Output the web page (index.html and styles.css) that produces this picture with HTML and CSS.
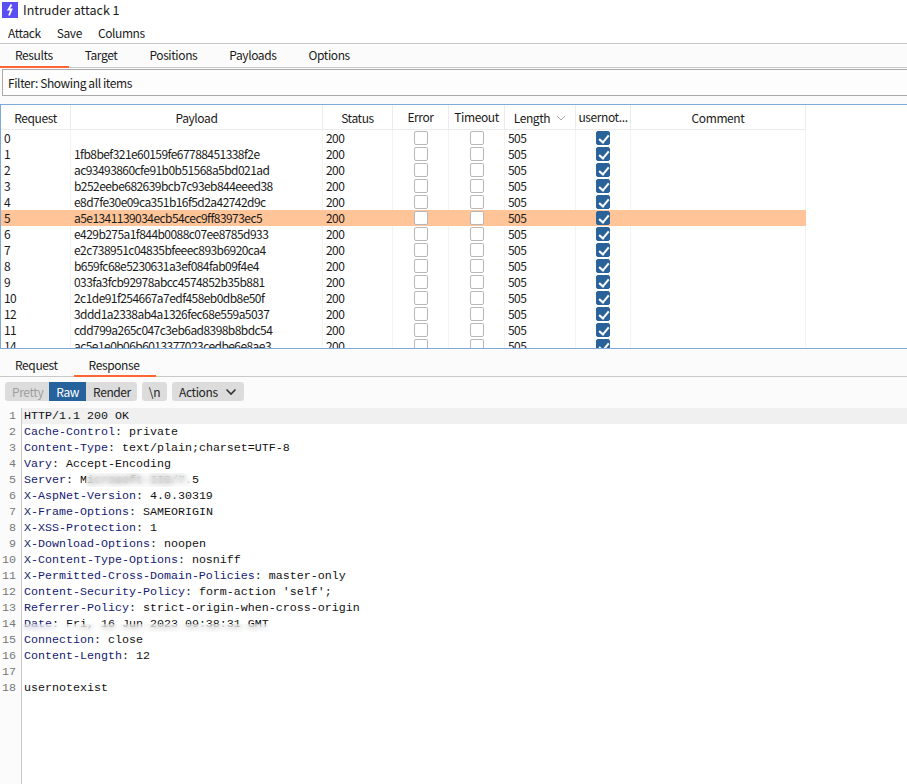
FILE: index.html
```html
<!DOCTYPE html>
<html lang="en">
<head>
<meta charset="utf-8">
<title>Intruder attack 1</title>
<link rel="stylesheet" href="styles.css">
</head>
<body>
<header class="titlebar">
  <svg class="logo" width="16" height="16" viewBox="0 0 16 16"><rect width="16" height="16" fill="#5a4ff3"/><path d="M9.500 2.500 6.500 7.500h3L7 13.500" fill="none" stroke="#fff" stroke-width="1.800"/></svg>
  <span>Intruder attack 1</span>
</header>
<nav class="menubar"><span>Attack</span><span>Save</span><span>Columns</span></nav>
<nav class="tabs top-tabs">
  <span class="tab active">Results</span><span class="tab">Target</span><span class="tab">Positions</span><span class="tab">Payloads</span><span class="tab">Options</span>
</nav>
<div class="filter"><div class="filter-box">Filter: Showing all items</div></div>
<section class="table">
  <div class="row head">
    <div>Request</div><div>Payload</div><div>Status</div><div>Error</div><div>Timeout</div>
    <div class="sorted">Length<svg width="10" height="6" viewBox="0 0 10 6"><path d="M1 1l4 4 4-4" fill="none" stroke="#aaa"/></svg></div>
    <div>usernot...</div><div>Comment</div>
  </div>
  <div class="rows">
    <div class="row"><div>0</div><div></div><div>200</div><div><i class="cb"></i></div><div><i class="cb"></i></div><div>505</div><div><i class="cb on"></i></div><div></div></div>
    <div class="row"><div>1</div><div>1fb8bef321e60159fe67788451338f2e</div><div>200</div><div><i class="cb"></i></div><div><i class="cb"></i></div><div>505</div><div><i class="cb on"></i></div><div></div></div>
    <div class="row"><div>2</div><div>ac93493860cfe91b0b51568a5bd021ad</div><div>200</div><div><i class="cb"></i></div><div><i class="cb"></i></div><div>505</div><div><i class="cb on"></i></div><div></div></div>
    <div class="row"><div>3</div><div>b252eebe682639bcb7c93eb844eeed38</div><div>200</div><div><i class="cb"></i></div><div><i class="cb"></i></div><div>505</div><div><i class="cb on"></i></div><div></div></div>
    <div class="row"><div>4</div><div>e8d7fe30e09ca351b16f5d2a42742d9c</div><div>200</div><div><i class="cb"></i></div><div><i class="cb"></i></div><div>505</div><div><i class="cb on"></i></div><div></div></div>
    <div class="row selected"><div>5</div><div>a5e1341139034ecb54cec9ff83973ec5</div><div>200</div><div><i class="cb"></i></div><div><i class="cb"></i></div><div>505</div><div><i class="cb on"></i></div><div></div></div>
    <div class="row"><div>6</div><div>e429b275a1f844b0088c07ee8785d933</div><div>200</div><div><i class="cb"></i></div><div><i class="cb"></i></div><div>505</div><div><i class="cb on"></i></div><div></div></div>
    <div class="row"><div>7</div><div>e2c738951c04835bfeeec893b6920ca4</div><div>200</div><div><i class="cb"></i></div><div><i class="cb"></i></div><div>505</div><div><i class="cb on"></i></div><div></div></div>
    <div class="row"><div>8</div><div>b659fc68e5230631a3ef084fab09f4e4</div><div>200</div><div><i class="cb"></i></div><div><i class="cb"></i></div><div>505</div><div><i class="cb on"></i></div><div></div></div>
    <div class="row"><div>9</div><div>033fa3fcb92978abcc4574852b35b881</div><div>200</div><div><i class="cb"></i></div><div><i class="cb"></i></div><div>505</div><div><i class="cb on"></i></div><div></div></div>
    <div class="row"><div>10</div><div>2c1de91f254667a7edf458eb0db8e50f</div><div>200</div><div><i class="cb"></i></div><div><i class="cb"></i></div><div>505</div><div><i class="cb on"></i></div><div></div></div>
    <div class="row"><div>12</div><div>3ddd1a2338ab4a1326fec68e559a5037</div><div>200</div><div><i class="cb"></i></div><div><i class="cb"></i></div><div>505</div><div><i class="cb on"></i></div><div></div></div>
    <div class="row"><div>11</div><div>cdd799a265c047c3eb6ad8398b8bdc54</div><div>200</div><div><i class="cb"></i></div><div><i class="cb"></i></div><div>505</div><div><i class="cb on"></i></div><div></div></div>
    <div class="row"><div>14</div><div>ac5e1e0b06b6013377023cedbe6e8ae3</div><div>200</div><div><i class="cb"></i></div><div><i class="cb"></i></div><div>505</div><div><i class="cb on"></i></div><div></div></div>
  </div>
</section>
<nav class="tabs sub-tabs">
  <span class="tab">Request</span><span class="tab active">Response</span>
</nav>
<div class="toolbar">
  <div class="segment"><span class="btn muted">Pretty</span><span class="btn current">Raw</span><span class="btn render">Render</span></div>
  <span class="btn single">\n</span>
  <span class="btn single actions">Actions<svg width="12" height="8" viewBox="0 0 12 8"><path d="M1.500 1.500 6 6l4.500-4.500" fill="none" stroke="#333" stroke-width="1.600"/></svg></span>
</div>
<section class="editor">
  <div class="line hl"><b>1</b><code>HTTP/1.1 200 OK</code></div>
  <div class="line"><b>2</b><code><em>Cache-Control</em>: private</code></div>
  <div class="line"><b>3</b><code><em>Content-Type</em>: text/plain;charset=UTF-8</code></div>
  <div class="line"><b>4</b><code><em>Vary</em>: Accept-Encoding</code></div>
  <div class="line"><b>5</b><code><em>Server</em>: Microsoft-IIS/7.5<span class="smudge server"></span></code></div>
  <div class="line"><b>6</b><code><em>X-AspNet-Version</em>: 4.0.30319</code></div>
  <div class="line"><b>7</b><code><em>X-Frame-Options</em>: SAMEORIGIN</code></div>
  <div class="line"><b>8</b><code><em>X-XSS-Protection</em>: 1</code></div>
  <div class="line"><b>9</b><code><em>X-Download-Options</em>: noopen</code></div>
  <div class="line"><b>10</b><code><em>X-Content-Type-Options</em>: nosniff</code></div>
  <div class="line"><b>11</b><code><em>X-Permitted-Cross-Domain-Policies</em>: master-only</code></div>
  <div class="line"><b>12</b><code><em>Content-Security-Policy</em>: form-action 'self';</code></div>
  <div class="line"><b>13</b><code><em>Referrer-Policy</em>: strict-origin-when-cross-origin</code></div>
  <div class="line"><b>14</b><code><em>Date</em>: Fri, 16 Jun 2023 09:38:31 GMT<span class="smudge date"></span></code></div>
  <div class="line"><b>15</b><code><em>Connection</em>: close</code></div>
  <div class="line"><b>16</b><code><em>Content-Length</em>: 12</code></div>
  <div class="line"><b>17</b><code></code></div>
  <div class="line"><b>18</b><code>usernotexist</code></div>
</section>
</body>
</html>
```
FILE: styles.css
```css
* { box-sizing: border-box; }
html, body { margin: 0; height: 100%; }
body {
  width: 907px;
  height: 784px;
  overflow: hidden;
  background: #fff;
  color: #1a1a1a;
  font: 12px/16px "Noto Sans CJK SC", "Noto Sans", sans-serif;
  letter-spacing: -0.4px;
  display: flex;
  flex-direction: column;
}
.titlebar {
  height: 23px;
  padding: 0 0 3px 2px;
  display: flex;
  align-items: center;
  gap: 5px;
  font-size: 12.500px;
  letter-spacing: 0;
}
.menubar {
  height: 21px;
  padding: 0 0 0 8px;
  display: flex;
  gap: 16px;
  align-items: center;
  border-bottom: 1px solid #c8c8c8;
}
.tabs { display: flex; background: #fbfbfb; }
.tab {
  display: flex;
  align-items: center;
  justify-content: center;
  border-bottom: 2px solid transparent;
}
.tab.active { border-bottom-color: #ff6633; }
.top-tabs {
  height: 24px;
  border-bottom: 1px solid #c8c8c8;
}
.top-tabs .tab { height: 24px; padding: 0 16px; }
.top-tabs .tab.active { padding: 0 16px 0 15px; }
.filter {
  height: 36px;
  padding: 1px 0 8px 2px;
  background: #fbfbfb;
  display: flex;
}
.filter-box {
  flex: 1;
  display: flex;
  align-items: center;
  padding-left: 5px;
  border: 1px solid #aaa;
  border-right: 0;
  background: #fdfdfd;
}
.table {
  height: 245px;
  border-top: 1px solid #7fa9d8;
  border-bottom: 1px solid #7fa9d8;
  border-left: 1px solid #7fa9d8;
  display: flex;
  flex-direction: column;
  overflow: hidden;
  background: #fff;
}
.row {
  display: grid;
  grid-template-columns: 70px 252px 70px 56px 56px 71px 55px 175px;
  width: 805px;
  height: 16px;
  letter-spacing: -0.56px;
}
.row > div {
  padding-left: 3px;
  display: flex;
  align-items: center;
  border-right: 1px solid #f3f3f3;
}
.row > div:nth-child(4), .row > div:nth-child(5), .row > div:nth-child(7) {
  justify-content: center;
  padding: 0;
}
.row.selected { background: #ffc599; }
.row.selected > div { border-right-color: transparent; }
.head {
  height: 25px;
  border-bottom: 1px solid #ececec;
  flex: none;
  background: #fff;
  letter-spacing: -0.4px;
}
.head > div {
  justify-content: center;
  padding: 1px 0 0;
  border-right: 1px solid #ececec;
  white-space: nowrap;
}
.sorted { gap: 6px; }
.rows { flex: 1; overflow: hidden; }
.cb {
  display: block;
  width: 14px;
  height: 14px;
  border: 1px solid #b8b8b8;
  border-radius: 2px;
  background: #fff;
  position: relative;
}
.cb.on {
  background: #2a6399;
  border-color: #2a6399;
}
.cb.on::after {
  content: "";
  position: absolute;
  left: 4px;
  top: 1px;
  width: 4px;
  height: 8px;
  border: solid #fff;
  border-width: 0 2px 2px 0;
  transform: rotate(40deg);
}
.sub-tabs {
  height: 28px;
  padding-top: 5px;
  border-bottom: 1px solid #c8c8c8;
}
.sub-tabs .tab { height: 23px; margin-bottom: -1px; padding: 0 16px 0 15px; }
.sub-tabs .tab.active { padding: 0 17px 0 15px; }
.toolbar {
  height: 31px;
  padding: 5px 0 0 5px;
  display: flex;
  gap: 5px;
  align-items: flex-start;
  background: #fbfbfb;
}
.segment { display: flex; border-radius: 3px; overflow: hidden; }
.btn {
  height: 19px;
  background: #dcdcdc;
  padding: 0 7px;
  display: flex;
  align-items: center;
  color: #222;
}
.btn.muted { color: #a0a0a0; padding-right: 6px; }
.btn.current { background: #26629c; color: #fff; }
.btn.render { padding-right: 6px; }
.btn.single { border-radius: 3px; }
.actions { gap: 7px; }
.editor {
  flex: 1;
  overflow: hidden;
  letter-spacing: 0;
  background: linear-gradient(to right, #fbfbfb 21px, #c8c8c8 21px, #c8c8c8 22px, #fff 22px);
}
.line {
  display: flex;
  height: 16px;
  font: 11.670px/16px "Liberation Mono", monospace;
}
.line b {
  width: 22px;
  flex: none;
  padding-right: 6px;
  text-align: right;
  font-weight: normal;
  color: #777;
}
.line code {
  font: inherit;
  padding-left: 2px;
  flex: 1;
  color: #111;
  white-space: pre;
  position: relative;
}
.line.hl code { background: #f0f0f0; }
.line em { font-style: normal; color: #14206e; }
.smudge {
  position: absolute;
  backdrop-filter: blur(3px);
  background: rgba(255, 255, 255, .2);
}
.smudge.server { left: 64px; top: 1px; width: 106px; height: 14px; }
.smudge.date { left: 0; top: 8px; width: 248px; height: 8px; }
```
